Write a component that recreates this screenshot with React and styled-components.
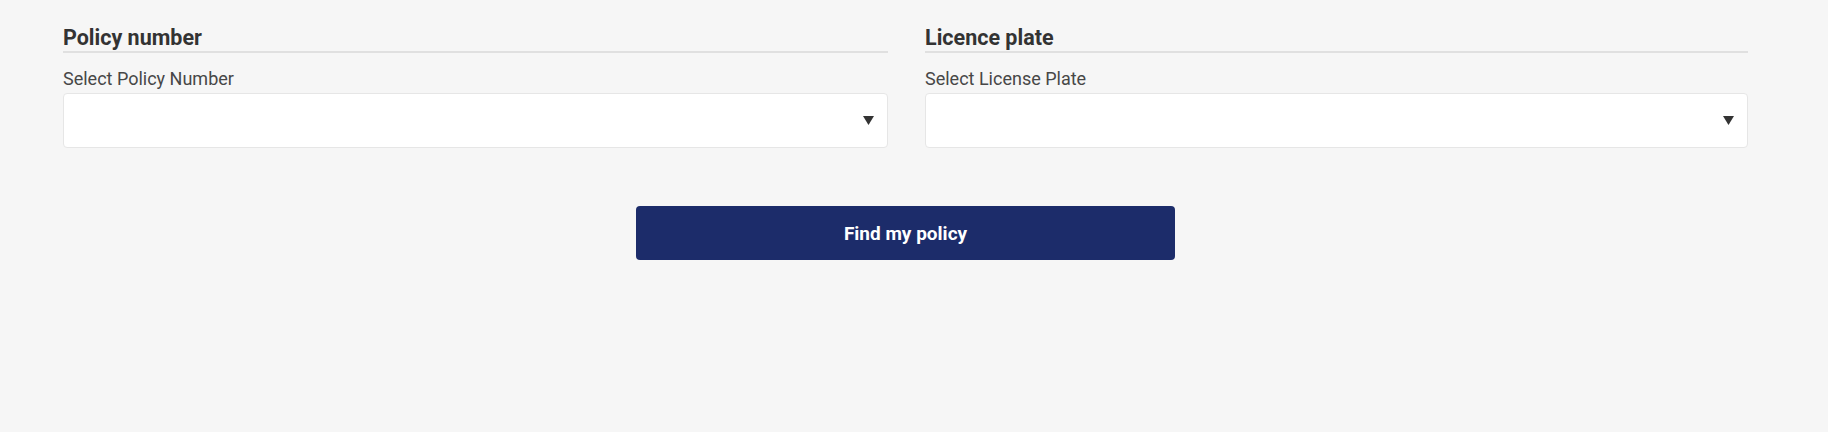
import React from 'react'
import styled, { createGlobalStyle } from 'styled-components'

const GlobalStyle = createGlobalStyle`
  html, body {
    margin: 0;
    padding: 0;
    background: #f6f6f6;
    font-family: Roboto, 'Liberation Sans', Arial, sans-serif;
  }
`

const Page = styled.div`
  width: 1828px;
  height: 432px;
  background: #f6f6f6;
  padding: 26px 0 0 63px;
  box-sizing: border-box;
`

const Form = styled.form`
  width: 1685px;
  display: flex;
  flex-direction: column;
`

const Fields = styled.div`
  display: grid;
  grid-template-columns: 825px 823px;
  column-gap: 37px;
`

const Field = styled.div`
  display: flex;
  flex-direction: column;
`

const Heading = styled.h3`
  margin: 0;
  font-size: 21.5px;
  line-height: 24px;
  font-weight: 700;
  color: #333;
  padding-bottom: 1px;
  border-bottom: 2px solid #e0e0e0;
`

const Label = styled.label`
  margin-top: 16px;
  font-size: 18px;
  line-height: 20px;
  color: #474747;
`

const SelectBox = styled.div`
  margin-top: 4px;
  height: 55px;
  box-sizing: border-box;
  background: #fff;
  border: 1px solid #e6e6e6;
  border-radius: 4px;
  display: flex;
  align-items: center;
  justify-content: flex-end;
  padding-right: 13px;
`

const Caret = styled.svg`
  width: 11px;
  height: 9px;
  fill: #333;
`

const Actions = styled.div`
  display: flex;
  justify-content: center;
  margin-top: 58px;
`

const Submit = styled.button`
  width: 539px;
  height: 54px;
  border: none;
  border-radius: 4px;
  background: #1c2c6a;
  color: #fff;
  font-family: Roboto, 'Liberation Sans', Arial, sans-serif;
  font-size: 19px;
  font-weight: 700;
  cursor: pointer;
`

const Select = ({ heading, label }) => (
  <Field>
    <Heading>{heading}</Heading>
    <Label>{label}</Label>
    <SelectBox>
      <Caret viewBox="0 0 11 9">
        <path d="M0 0 L11 0 L5.5 9 Z" />
      </Caret>
    </SelectBox>
  </Field>
)

export default function App() {
  return (
    <Page>
      <GlobalStyle />
      <Form onSubmit={e => e.preventDefault()}>
        <Fields>
          <Select heading="Policy number" label="Select Policy Number" />
          <Select heading="Licence plate" label="Select License Plate" />
        </Fields>
        <Actions>
          <Submit type="submit">Find my policy</Submit>
        </Actions>
      </Form>
    </Page>
  )
}
